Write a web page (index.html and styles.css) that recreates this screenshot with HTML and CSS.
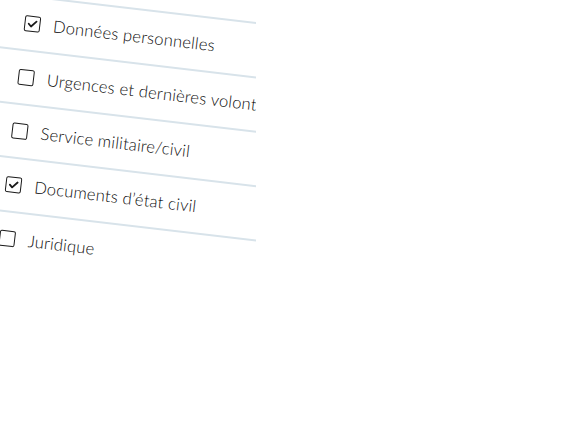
FILE: index.html
```html
<!DOCTYPE html>
<html lang="fr">
<head>
<meta charset="utf-8">
<title>Catégories</title>
<link rel="stylesheet" href="styles.css">
</head>
<body>
<div class="frame">
  <ul class="list">
    <li class="item"><span class="box checked"><svg viewBox="0 0 12 12"><path d="M2.3 6.2 L4.9 8.7 L9.8 3.2"/></svg></span><span class="label">Données personnelles</span></li>
    <li class="item"><span class="box"></span><span class="label">Urgences et dernières volontés</span></li>
    <li class="item"><span class="box"></span><span class="label">Service militaire/civil</span></li>
    <li class="item"><span class="box checked"><svg viewBox="0 0 12 12"><path d="M2.3 6.2 L4.9 8.7 L9.8 3.2"/></svg></span><span class="label">Documents d’état civil</span></li>
    <li class="item"><span class="box"></span><span class="label">Juridique</span></li>
  </ul>
</div>
</body>
</html>
```

FILE: styles.css
```css
html, body {
  margin: 0;
  padding: 0;
  background: #ffffff;
}

.frame {
  width: 256px;
  height: 256px;
  overflow: hidden;
  position: relative;
}

.list {
  list-style: none;
  margin: 0;
  padding: 0;
  width: 300px;
  transform-origin: 0 0;
  transform: rotate(6.7deg) translate(0, -8px);
  font-family: Lato, "Noto Sans", sans-serif;
  font-weight: 300;
  font-size: 16.6px;
  color: #0c0c0c;
}

.item {
  display: flex;
  align-items: center;
  gap: 13px;
  height: 52px;
  padding-left: 27px;
  border-top: 2px solid #d8e3ea;
  white-space: nowrap;
}

.box {
  box-sizing: border-box;
  width: 16px;
  height: 16px;
  border: 1.8px solid #1a1a1a;
  border-radius: 2px;
  display: flex;
  align-items: center;
  justify-content: center;
  flex: none;
}

.box svg {
  width: 12px;
  height: 12px;
  fill: none;
  stroke: #1a1a1a;
  stroke-width: 1.8;
  stroke-linecap: round;
  stroke-linejoin: round;
}

.label {
  line-height: 20px;
  letter-spacing: 0.2px;
}
```
